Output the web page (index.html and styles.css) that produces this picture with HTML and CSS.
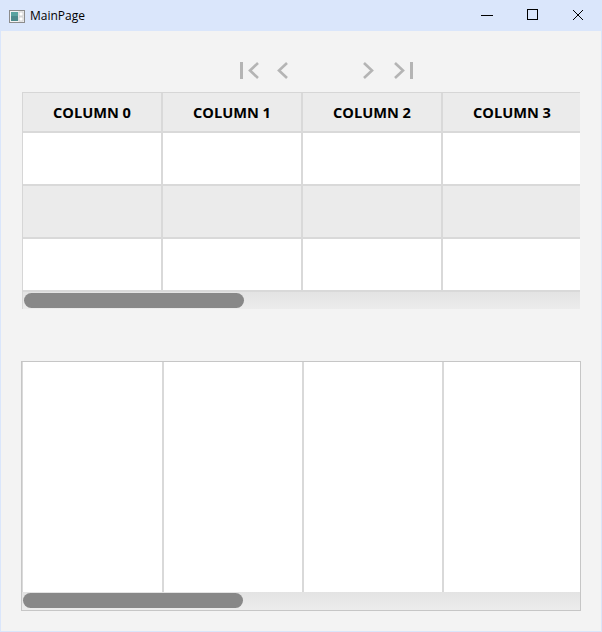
FILE: index.html
```html
<!DOCTYPE html>
<html lang="en">
<head>
    <meta charset="UTF-8">
    <meta name="viewport" content="width=device-width, initial-scale=1.0">
    <title>MainPage</title>
    <link rel="stylesheet" href="styles.css">
</head>
<body>
    <header class="titleBar">
        <svg class="appIcon" width="16" height="13" viewBox="0 0 16 13">
            <rect x="0.5" y="0.5" width="15" height="12" fill="#f4f4f4" stroke="#8c8c8c"/>
            <rect x="2" y="2" width="7" height="9" fill="#4d8a8c"/>
            <rect x="2" y="2" width="7" height="4" fill="#5aa3a0"/>
            <rect x="10" y="2" width="4" height="4" fill="#ffffff" stroke="#b8b8b8" stroke-width="0.6"/>
            <rect x="10" y="7" width="4" height="4" fill="#ffffff" stroke="#b8b8b8" stroke-width="0.6"/>
        </svg>
        <span class="title">MainPage</span>
        <div class="controls">
            <svg class="ctl" width="46" height="30" viewBox="0 0 46 30"><path d="M18 15.5h12" stroke="#000" stroke-width="1"/></svg>
            <svg class="ctl" width="46" height="30" viewBox="0 0 46 30"><rect x="18.5" y="9.5" width="10" height="10" fill="none" stroke="#000"/></svg>
            <svg class="ctl" width="46" height="30" viewBox="0 0 46 30"><path d="M18 10l10 10M28 10l-10 10" stroke="#000" stroke-width="1"/></svg>
        </div>
    </header>
    <div class="window">
        <div class="pager">
            <button class="pageBtn">
                <svg width="24" height="24" viewBox="0 0 24 24"><rect x="3" y="4" width="3" height="17" fill="#b4b4b4"/><path d="M21 5l-8 7.5 8 7.5" fill="none" stroke="#b4b4b4" stroke-width="2.6"/></svg>
            </button>
            <button class="pageBtn">
                <svg width="24" height="24" viewBox="0 0 24 24"><path d="M16 5l-8 7.5 8 7.5" fill="none" stroke="#b4b4b4" stroke-width="2.6"/></svg>
            </button>
            <div class="pageSpace"></div>
            <button class="pageBtn">
                <svg width="24" height="24" viewBox="0 0 24 24"><path d="M8 5l8 7.5-8 7.5" fill="none" stroke="#b4b4b4" stroke-width="2.6"/></svg>
            </button>
            <button class="pageBtn last">
                <svg width="24" height="24" viewBox="0 0 24 24"><path d="M4 5l8 7.5-8 7.5" fill="none" stroke="#b4b4b4" stroke-width="2.6"/><rect x="19" y="4" width="3" height="17" fill="#b4b4b4"/></svg>
            </button>
        </div>

        <div class="grid gridTop">
            <div class="row head">
                <div class="cell">COLUMN 0</div>
                <div class="cell">COLUMN 1</div>
                <div class="cell">COLUMN 2</div>
                <div class="cell">COLUMN 3</div>
            </div>
            <div class="row">
                <div class="cell"></div><div class="cell"></div><div class="cell"></div><div class="cell"></div>
            </div>
            <div class="row alt">
                <div class="cell"></div><div class="cell"></div><div class="cell"></div><div class="cell"></div>
            </div>
            <div class="row">
                <div class="cell"></div><div class="cell"></div><div class="cell"></div><div class="cell"></div>
            </div>
            <div class="hScroll"><div class="thumb"></div></div>
        </div>

        <div class="grid gridBottom">
            <div class="cols">
                <div class="col first"></div>
                <div class="col"></div>
                <div class="col"></div>
                <div class="col"></div>
            </div>
            <div class="hScroll tall"><div class="thumb"></div></div>
        </div>
    </div>
</body>
</html>
```

FILE: styles.css
```css
*{
    box-sizing: border-box;
}
body{
    margin: 0;
    width: 602px;
    height: 632px;
    font-family: "Open Sans", "Noto Sans", sans-serif;
    background: #f3f3f3;
    overflow: hidden;
}
.titleBar{
    height: 31px;
    background: #dae6fb;
    display: flex;
    align-items: center;
}
.appIcon{
    margin-left: 9px;
    margin-top: 1px;
}
.title{
    margin-left: 5px;
    font-size: 12px;
    color: #000;
}
.controls{
    margin-left: auto;
    display: flex;
    align-self: flex-start;
    margin-right: 1px;
}
.ctl{
    display: block;
}
.window{
    height: 601px;
    padding-top: 27px;
    border: 1px solid #dae6fb;
    border-top: none;
    background: #f3f3f3;
}
.pager{
    display: flex;
    gap: 10px;
    margin-left: 236px;
    height: 24px;
}
.pageBtn{
    width: 24px;
    height: 24px;
    padding: 0;
    border: none;
    background: none;
}
.pageBtn svg{
    display: block;
}
.pageSpace{
    width: 41px;
}
.pageBtn.last{
    margin-left: 1px;
}
.grid{
    overflow: hidden;
}
.gridTop{
    margin-top: 10px;
    margin-left: 21px;
    width: 558px;
    border-top: 1px solid #d6d6d6;
    border-left: 1px solid #d6d6d6;
}
.row{
    display: flex;
    height: 53px;
    background: #ffffff;
}
.row.head{
    height: 40px;
    background: #ebebeb;
}
.row.alt{
    background: #ebebeb;
}
.cell{
    flex: 0 0 140px;
    border-right: 2px solid #d9d9d9;
    border-bottom: 2px solid #d9d9d9;
    display: flex;
    align-items: center;
    justify-content: center;
    font-size: 14.6px;
    font-weight: 700;
    color: #000;
}
.hScroll{
    height: 17px;
    background: linear-gradient(#e3e3e3, #ececec);
    padding: 1px 0 0 1px;
}
.hScroll.tall{
    height: 18px;
}
.thumb{
    width: 220px;
    height: 15px;
    border-radius: 8px;
    background: #888888;
}
.gridBottom{
    margin-top: 52px;
    margin-left: 20px;
    width: 560px;
    border: 1px solid #c6c6c6;
}
.cols{
    display: flex;
    height: 230px;
    background: #ffffff;
}
.col{
    flex: 0 0 140px;
    border-right: 2px solid #d9d9d9;
}
.col.first{
    flex-basis: 142px;
    border-left: 1px solid #dadada;
}
```
